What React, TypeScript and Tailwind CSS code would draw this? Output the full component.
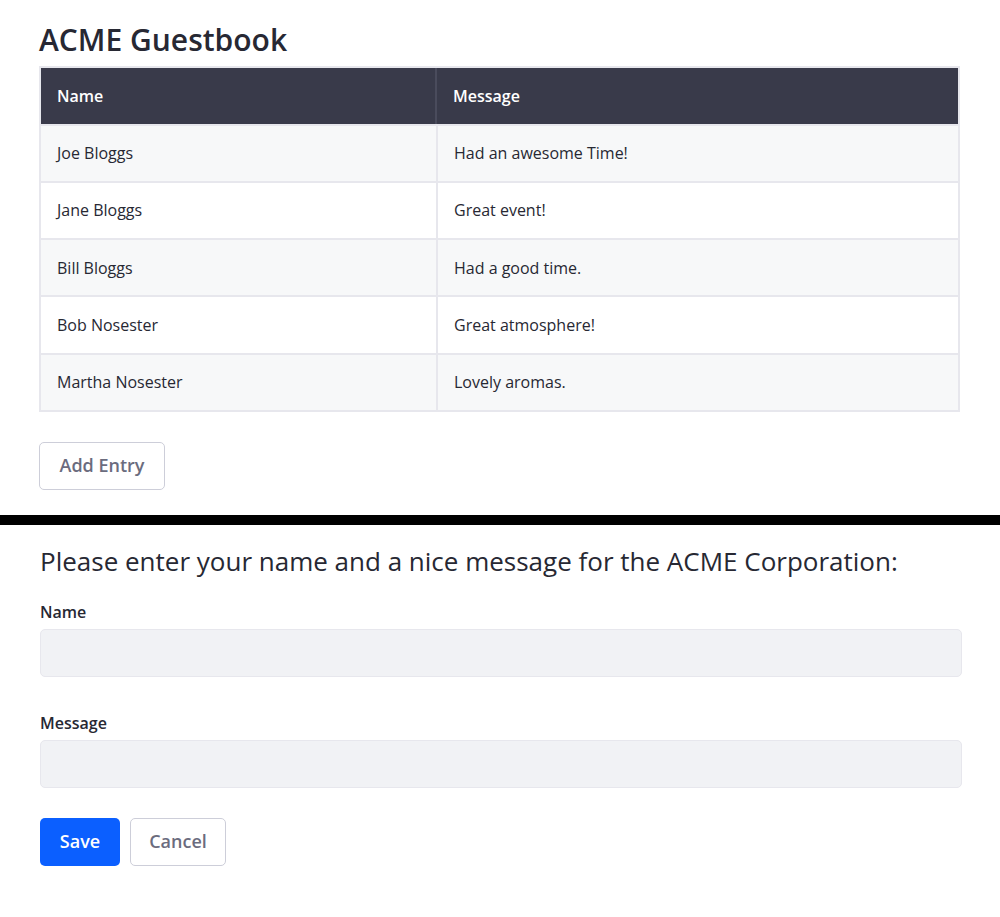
import React from 'react';

const entries = [
  { name: 'Joe Bloggs', message: 'Had an awesome Time!' },
  { name: 'Jane Bloggs', message: 'Great event!' },
  { name: 'Bill Bloggs', message: 'Had a good time.' },
  { name: 'Bob Nosester', message: 'Great atmosphere!' },
  { name: 'Martha Nosester', message: 'Lovely aromas.' },
];

const App: React.FC = () => {
  return (
    <div className="min-h-screen bg-white text-[#272833] font-['Open_Sans',sans-serif]">
      <div className="pl-[39px] pr-[40px] pt-[20px]">
        <h1 className="text-[30px] leading-[40px] font-semibold mb-[6px]">ACME Guestbook</h1>
        <table className="w-full border-collapse border-2 border-[#e7e7ed] text-[16px]">
          <thead>
            <tr className="bg-[#393a4a] text-white h-[57.5px]">
              <th className="w-[397px] text-left font-semibold px-[16px] shadow-[inset_-2px_0_0_#4a4b5c]">Name</th>
              <th className="text-left font-semibold px-[16px]">Message</th>
            </tr>
          </thead>
          <tbody>
            {entries.map((e, i) => (
              <tr key={e.name} className={`h-[57.3px] border-t-2 border-[#e7e7ed] ${i % 2 === 0 ? 'bg-[#f7f8f9]' : 'bg-white'}`}>
                <td className="px-[16px] border-r-2 border-[#e7e7ed]">{e.name}</td>
                <td className="px-[16px]">{e.message}</td>
              </tr>
            ))}
          </tbody>
        </table>
        <button className="mt-[30px] h-[48px] w-[126px] rounded-[5px] border border-[#cdced9] bg-white text-[#6b6c7e] text-[18px] font-semibold">
          Add Entry
        </button>
      </div>

      <div className="mt-[25px] h-[10px] bg-black" />

      <div className="pl-[40px] pr-[38px] pt-[20px] pb-[50px]">
        <h2 className="text-[26px] leading-[32px] font-normal mb-[23px]">
          Please enter your name and a nice message for the ACME Corporation:
        </h2>
        <div className="mb-[34px]">
          <label className="block text-[16px] leading-[24px] font-semibold mb-[5px]">Name</label>
          <input className="block w-full h-[48px] rounded-[5px] border border-[#e7e7ed] bg-[#f1f2f5] px-3 outline-none" />
        </div>
        <div className="mb-[30px]">
          <label className="block text-[16px] leading-[24px] font-semibold mb-[5px]">Message</label>
          <input className="block w-full h-[48px] rounded-[5px] border border-[#e7e7ed] bg-[#f1f2f5] px-3 outline-none" />
        </div>
        <div className="flex gap-[10px]">
          <button className="h-[48px] w-[80px] rounded-[5px] bg-[#0b5fff] text-white text-[18px] font-semibold">
            Save
          </button>
          <button className="h-[48px] w-[96px] rounded-[5px] border border-[#cdced9] bg-white text-[#6b6c7e] text-[18px] font-semibold">
            Cancel
          </button>
        </div>
      </div>
    </div>
  );
};

export default App;
